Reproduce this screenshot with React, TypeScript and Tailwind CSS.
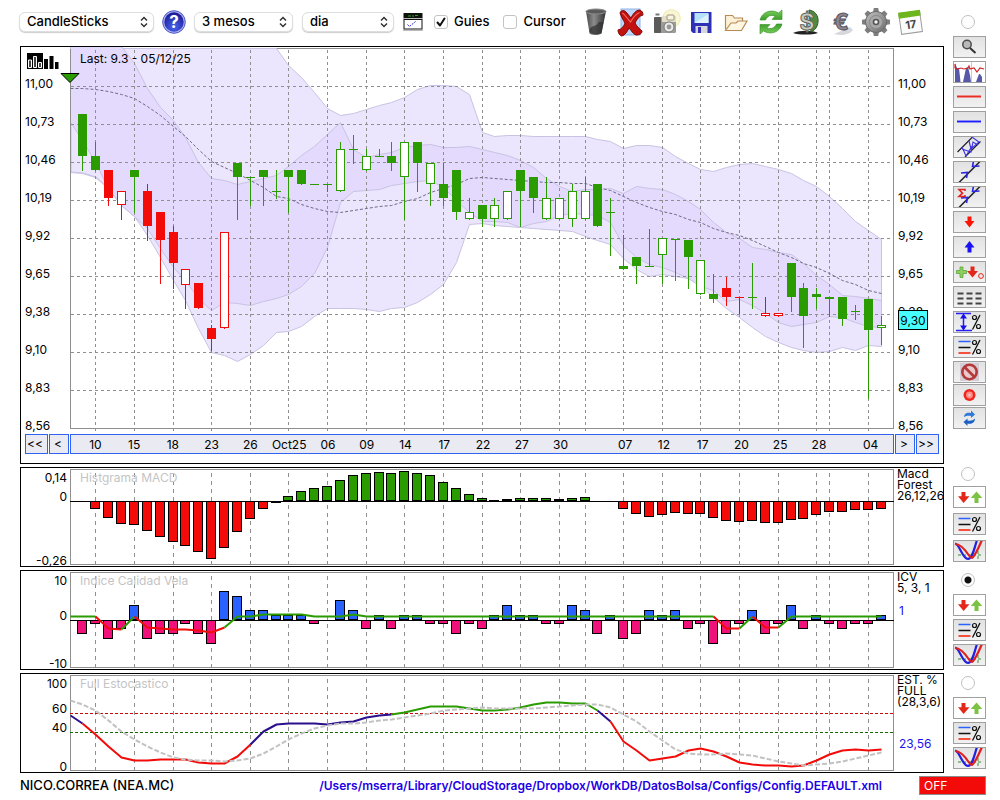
import { useState } from 'react'
import type { ReactNode } from 'react'
import clsx from 'clsx'

type Candle = {
    top: number
    bottom: number
    high?: number
    low?: number
    color?: string
    hollow?: boolean
}

const GREEN = '#2a9b00'
const RED = '#f20b08'
const NAVY = '#2b0f8c'
const GRID = '#8f8f8f'

const DATES: [number, string][] = [
    [1, '10'], [4, '15'], [7, '18'], [10, '23'], [13, '26'], [16, 'Oct25'], [19, '06'],
    [22, '09'], [25, '14'], [28, '17'], [31, '22'], [34, '27'], [37, '30'], [39, ''],
    [42, '07'], [45, '12'], [48, '17'], [51, '20'], [54, '25'], [57, '28'], [58, ''], [61, '04'],
]
const PRICES = ['11,00', '10,73', '10,46', '10,19', '9,92', '9,65', '9,38', '9,10', '8,83', '8,56']

// x of a bar, -1 is the left edge of the plot
const barX = (i: number) => (i < 0 ? 70 : 82 + 13 * i - Math.floor(i / 8))

const line = (ys: number[], from = -1) =>
    ys.map((y, i) => `${barX(from + i) + 0.5},${y + 0.5}`).join(' ')

const c = (top: number, bottom: number, high?: number, low?: number): Candle => ({ top, bottom, high, low })
const h = (top: number, bottom: number, high?: number, low?: number): Candle => ({ top, bottom, high, low, hollow: true })
const r = (top: number, bottom: number, high?: number, low?: number): Candle => ({ top, bottom, high, low, color: RED })
const rh = (top: number, bottom: number, high?: number, low?: number): Candle => ({ top, bottom, high, low, color: RED, hollow: true })

const CANDLES: Candle[] = [
    c(114, 156, 114, 171), c(156, 170, 142, 171), r(170, 198, 170, 206), rh(191, 205, 191, 220),
    c(170, 177, 170, 213), r(191, 226, 184, 241), r(212, 240, 212, 284), r(232, 263, 226, 289),
    rh(269, 285, 269, 309), r(283, 308, 283, 309), r(328, 339, 325, 351), rh(232, 328, 232, 329),
    c(163, 177, 163, 220), c(177, 178, 177, 206), c(170, 177, 170, 206), c(191, 192, 170, 199),
    c(170, 177, 170, 213), c(170, 184, 170, 185), c(184, 185), c(184, 185, 184, 192),
    h(149, 191, 142, 192), c(149, 150, 135, 164), h(156, 170, 149, 171), c(156, 157, 149, 157),
    c(156, 163, 142, 171), h(142, 177, 142, 220), c(142, 163, 142, 192), h(163, 184, 163, 206),
    c(184, 198, 163, 206), c(170, 212, 170, 220), h(212, 219, 198, 220), c(205, 219, 205, 227),
    h(205, 219, 198, 227), h(191, 219, 191, 220), c(170, 191, 170, 227), c(177, 198, 177, 213),
    h(198, 219, 177, 220), h(198, 219, 198, 220), h(191, 219, 184, 227), h(191, 219, 177, 220),
    c(184, 226, 184, 227), c(212, 213, 198, 256), c(266, 269, 235, 270), c(257, 266, 257, 284),
    c(266, 267, 229, 267), h(238, 255, 238, 284), c(239, 240, 239, 281), c(240, 257, 240, 289),
    h(260, 294, 260, 295), c(294, 299, 274, 303), r(288, 297, 277, 306), r(297, 298, 297, 314),
    c(297, 298, 263, 309), rh(313, 316, 297, 317), rh(313, 316, 313, 317), c(263, 297, 263, 312),
    c(288, 316, 283, 348), c(294, 297, 288, 309), c(297, 299, 297, 317), c(297, 319, 297, 326),
    c(311, 312, 305, 320), c(299, 330, 299, 399), h(325, 328, 316, 345),
]

const WIDE_UPPER = [
    48, 48, 48, 48, 48, 48, 48, 48, 48, 48, 48, 48, 48, 48, 48, 48, 48, 65, 77, 92, 108, 115, 113, 109, 105, 102, 97,
    89, 85, 85, 86, 94, 132, 136, 135, 135, 136, 136, 136, 136, 136, 139, 141, 148, 145, 145, 147, 156, 163, 169, 171,
    167, 164, 163, 166, 169, 173, 180, 186, 196, 208, 221, 230, 239,
]
const WIDE_LOWER = [
    172, 173, 177, 188, 205, 216, 235, 257, 280, 300, 328, 352, 355, 361, 354, 345, 332, 331, 326, 316, 308, 308, 308,
    309, 311, 308, 307, 302, 294, 284, 262, 224, 223, 225, 226, 227, 228, 229, 230, 231, 236, 240, 244, 258, 269, 276,
    274, 276, 278, 285, 297, 308, 317, 327, 336, 342, 347, 350, 352, 351, 347, 350, 345, 346,
]
const TIGHT_UPPER = [
    46, 46, 46, 46, 46, 63, 88, 107, 120, 137, 162, 178, 180, 184, 181, 178, 175, 166, 155, 146, 134, 122, 149, 157,
    154, 152, 147, 145, 144, 147, 147, 146, 149, 152, 155, 160, 167, 178, 186, 191, 189, 189, 188, 193, 186, 188, 189,
    194, 201, 209, 222, 232, 238, 247, 249, 252, 254, 263, 275, 284, 295, 296, 298, 300,
]
const TIGHT_LOWER = [
    123, 141, 163, 188, 205, 216, 228, 248, 267, 280, 298, 310, 302, 303, 305, 301, 298, 294, 286, 273, 247, 202, 191,
    190, 189, 185, 183, 181, 180, 187, 200, 212, 221, 221, 222, 227, 223, 221, 215, 213, 214, 215, 222, 245, 257, 264,
    267, 272, 278, 286, 290, 301, 299, 305, 313, 322, 326, 324, 322, 316, 317, 322, 326, 327,
]
const AVERAGE = [
    88, 88, 89, 91, 94, 98, 106, 115, 126, 136, 149, 161, 167, 173, 180, 187, 196, 198, 204, 208, 211, 212, 210, 208,
    206, 205, 201, 198, 192, 188, 184, 178, 177, 178, 179, 180, 181, 182, 182, 183, 183, 187, 190, 196, 202, 207, 211,
    214, 219, 222, 228, 232, 235, 240, 246, 252, 257, 263, 267, 273, 280, 284, 290, 293,
]

// bar heights in pixels over and under the zero line
const MACD = [
    0, -8, -17, -23, -24, -30, -36, -41, -45, -51, -58, -47, -31, -18, -8, -2, 5, 10, 13, 15, 21, 26, 28, 29, 28, 30,
    28, 26, 19, 13, 7, 3, 1, 2, 3, 3, 3, 2, 3, 4, 0, 0, -8, -13, -16, -14, -12, -13, -13, -17, -20, -21, -20, -22,
    -22, -19, -18, -14, -11, -11, -9, -9, -8,
]
const ICV = [
    -14, -4, -19, -9, 15, -19, -14, -14, -4, -14, -24, 29, 24, 10, 10, 5, 5, 5, -4, 0, 20, 10, -9, 5, -9, 5, 5, -4,
    -4, -14, -4, -9, 5, 15, 5, 5, -4, -4, 15, 10, -14, 5, -19, -14, 10, 5, 10, -9, -4, -24, -14, -4, 10, -14, -4, 15,
    -9, 5, -4, -9, -4, -4, 5,
]
const ICV_RUNS: [string, number, number[]][] = [
    [GREEN, -1, [616, 616, 616]],
    [RED, 1, [616, 628, 629]],
    [GREEN, 3, [629, 616]],
    [RED, 4, [616, 627, 628, 629, 629, 630, 632, 627]],
    [GREEN, 11, [627, 616, 616, 614, 614, 614, 614, 616, 616, 616, 614, 616]],
    [GREEN, 22, Array(28).fill(616)],
    [RED, 49, [616, 628, 628]],
    [GREEN, 51, [628, 616]],
    [RED, 52, [616, 627, 627]],
    [GREEN, 54, [627, 616, 616, 616, 616, 616, 616, 616, 616]],
]
const STOCH_RUNS: [string, number, number[]][] = [
    [NAVY, -1, [715, 723]],
    [RED, 0, [723, 734, 746, 757, 760, 760, 759, 759, 759, 762, 763, 763, 756, 744]],
    [NAVY, 13, [744, 731, 724, 723, 723, 723, 724, 722, 721, 717, 715, 714]],
    [GREEN, 24, [714, 712, 709, 706, 706, 706, 708, 710, 710, 709, 707, 704, 702, 702, 703, 703, 710]],
    [NAVY, 40, [710, 721]],
    [RED, 41, [721, 741, 750, 760, 758, 756, 750, 748, 751, 756, 762, 764, 765, 765, 766, 765, 760, 754, 750, 749, 750, 749]],
]
const STOCH_SIGNAL = [
    700, 704, 710, 720, 731, 739, 746, 752, 757, 759, 760, 760, 761, 760, 758, 753, 746, 739, 733, 728, 725, 723, 723,
    722, 720, 719, 717, 715, 713, 710, 709, 708, 707, 708, 708, 708, 708, 707, 706, 705, 704, 704, 707, 714, 721, 731,
    740, 749, 753, 754, 754, 753, 754, 755, 758, 761, 763, 765, 764, 763, 761, 758, 755, 752,
]

function GridColumns({ y1, y2, dash }: { y1: number; y2: number; dash: string }) {
    return (
        <g stroke={GRID} strokeDasharray={dash} shapeRendering="crispEdges">
            {DATES.map(([i]) => (
                <line key={i} x1={barX(i) + 0.5} x2={barX(i) + 0.5} y1={y1} y2={y2} />
            ))}
        </g>
    )
}

function PriceChart() {
    const band = (upper: number[], lower: number[]) => {
        const back = line(lower).split(' ').reverse().join(' ')
        return `${line(upper)} ${back}`
    }
    return (
        <svg viewBox="70 47 824 384" preserveAspectRatio="none" className="block w-full h-[384px]" role="img" aria-label="Candlesticks">
            <rect x="70.5" y="48.5" width="823" height="380" fill="none" stroke={GRID} shapeRendering="crispEdges" />
            <polygon points={band(WIDE_UPPER, WIDE_LOWER)} fill="#ebe5fe" stroke="#c9c3e3" />
            <polygon points={band(TIGHT_UPPER, TIGHT_LOWER)} fill="#e3dafd" stroke="#c9c3e3" />
            <polygon points="71,123 71,172 83,173 96,177 108,188 96,163 83,141" fill="#ebe5fe" stroke="#c9c3e3" />
            <GridColumns y1={50} y2={431} dash="3 3" />
            <g stroke={GRID} strokeDasharray="3 3" shapeRendering="crispEdges">
                {PRICES.slice(0, 9).map((p, i) => (
                    <line key={p} x1="71" x2="895" y1={86.5 + i * 38} y2={86.5 + i * 38} />
                ))}
            </g>
            <path d="M70.5 49v380" stroke={GRID} shapeRendering="crispEdges" />
            <polyline points={line(AVERAGE)} fill="none" stroke="#6f6a86" strokeDasharray="3 2" />
            <g shapeRendering="crispEdges">
                {CANDLES.map((k, i) => {
                    const x = barX(i)
                    const color = k.color ?? GREEN
                    return (
                        <g key={i} fill={color}>
                            <rect x={x} y={k.high ?? k.top} width="1" height={(k.low ?? k.bottom) - (k.high ?? k.top)} />
                            <rect x={x - 4} y={k.top} width="9" height={k.bottom - k.top} />
                            {k.hollow && <rect x={x - 3} y={k.top + 1} width="7" height={k.bottom - k.top - 2} fill="#fff" />}
                        </g>
                    )
                })}
            </g>
        </svg>
    )
}

function Bars({ values, zero, up, down }: { values: number[]; zero: number; up: string; down: string }) {
    return (
        <g shapeRendering="crispEdges">
            {values.map((v, i) =>
                v === 0 ? null : (
                    <g key={i}>
                        <rect x={barX(i) - 5} y={v > 0 ? zero - v : zero} width="10" height={Math.abs(v)} fill="#000" />
                        {Math.abs(v) > 2 && (
                            <rect x={barX(i) - 4} y={v > 0 ? zero - v + 1 : zero + 1} width="8" height={Math.abs(v) - 2} fill={v > 0 ? up : down} />
                        )}
                    </g>
                ),
            )}
            <rect x="70" y={zero} width="824" height="1" fill="#000" />
        </g>
    )
}

function Runs({ runs }: { runs: [string, number, number[]][] }) {
    return (
        <g fill="none" strokeWidth="2" strokeLinejoin="round">
            {runs.map(([color, from, ys]) => (
                <polyline key={from} points={line(ys, from)} stroke={color} />
            ))}
        </g>
    )
}

function StudyChart({ y, name, children }: { y: number; name: string; children: ReactNode }) {
    return (
        <svg viewBox={`70 ${y} 824 98`} preserveAspectRatio="none" className="block w-full h-[98px]" role="img" aria-label={name}>
            <rect x="70.5" y={y + 1.5} width="823" height="95" fill="none" stroke={GRID} shapeRendering="crispEdges" />
            <GridColumns y1={y + 5} y2={y + 98} dash="4 4" />
            {children}
        </svg>
    )
}

/* ---------- side buttons ---------- */

function ToolButton({ label, white, children }: { label: string; white?: boolean; children: ReactNode }) {
    return (
        <button
            type="button"
            aria-label={label}
            title={label}
            className={clsx(
                'h-[22px] w-[33px] shrink-0 border border-[#a0a0a0] overflow-hidden',
                white ? 'bg-white' : 'bg-linear-to-b from-[#e2e2e2] to-[#f1f1f1]',
            )}
        >
            <svg viewBox="0 0 31 20" className="block h-5 w-[31px]" fill="none">{children}</svg>
        </button>
    )
}

function Percent() {
    return (
        <g stroke="#111">
            <path d="M26 3L18.500 17.500" strokeWidth="1.300" />
            <circle cx="20.500" cy="5.500" r="2" strokeWidth="1.200" />
            <circle cx="24.500" cy="14.500" r="2" strokeWidth="1.200" />
        </g>
    )
}

const LevelsIcon = () => (
    <>
        <path d="M4.500 4.500h12" stroke="#2b62ff" strokeWidth="1.500" />
        <path d="M4.500 10.500h12" stroke="#111" strokeWidth="1.500" />
        <path d="M4.500 16h12" stroke="#f5503c" strokeWidth="2" />
        <Percent />
    </>
)

const UpDownIcon = () => (
    <>
        <path d="M7.500 5h4v4.200h4L9.600 16 4 9.200h3.500z" fill="#e3271b" />
        <path d="M22.500 4.500l5.800 6.500h-3.800v5h-4v-5h-3.800z" fill="#7cc243" />
    </>
)

const CurvesIcon = () => (
    <>
        <path d="M4 14h25M24 10v10" stroke="#3d8f2c" strokeDasharray="3 2" />
        <path d="M1 2.500c5 1 7 15 13 15.500C18.500 17.500 20 8 23 -1" stroke="#2420e0" strokeWidth="2.200" />
        <path d="M1 3c6 0 11 7 14 11.500s4 2 7-3S26 3 28 -1" stroke="#e02020" strokeWidth="2.200" />
    </>
)

const CrossArrows = () => (
    <>
        <path d="M4.500 21L26 -.5" stroke="#222" strokeWidth="1.500" />
        <path d="M7 11l6.500-.5-1 5.500M25.500 4l-7 .5L19.500-1" stroke="#2a25e0" strokeWidth="1.600" />
    </>
)

function DrawingTools() {
    return (
        <>
            <div className="flex flex-col gap-[3px]">
                <ToolButton label="Zoom">
                    <circle cx="13" cy="7.500" r="4.200" fill="#b9b9b9" stroke="#4c4c4c" strokeWidth="1.500" />
                    <path d="M16 11l5.500 5" stroke="#333" strokeWidth="2" />
                </ToolButton>
                <ToolButton label="Volum" white>
                    <path d="M1 20V1l2 5 2 0 1.500 14zM9 20l3-14 2-1 2 8 1 7zM22 20l3-8 1 0 2 3v5z" fill="#5758a8" />
                    <path d="M17.500 0v20" stroke="#c9c7e6" />
                    <path d="M1 2v4l2 1 4-1 3 1 4-1 1-2 1 3 4-1 3 4 3-4 4 1" stroke="#d02626" strokeWidth="1.200" />
                </ToolButton>
                <ToolButton label="Linia vermella">
                    <path d="M3 9.500h24" stroke="#f08c88" strokeWidth="3" />
                    <path d="M3 9.500h24" stroke="#e33128" />
                </ToolButton>
                <ToolButton label="Linia blava">
                    <path d="M3 9.500h24" stroke="#8f90f4" strokeWidth="3" />
                    <path d="M3 9.500h24" stroke="#1e1eff" />
                </ToolButton>
                <ToolButton label="Canal">
                    <path d="M3.500 15L18.500 0M11 20L26.500 4.500" stroke="#222" strokeWidth="1.200" />
                    <path d="M18 0l7 5-8 7-2-8M8 10l4 9 6-10M8 12l9 3 2-10 5 3" stroke="#3a33e6" strokeWidth="1.100" />
                </ToolButton>
                <ToolButton label="Creuament">
                    <CrossArrows />
                </ToolButton>
                <ToolButton label="Suma">
                    <CrossArrows />
                    <path d="M11 4V2.500H5l3.500 3.700L5 9.500h6V8" stroke="#e02420" strokeWidth="1.600" />
                </ToolButton>
                <ToolButton label="Baixista">
                    <path d="M13.500 4.500h4v4.500h3L15.500 15.500 10.500 9h3z" fill="#fb1408" />
                </ToolButton>
                <ToolButton label="Alcista">
                    <path d="M15.500 4l5 6.500h-3v5h-4v-5h-3z" fill="#1a12f5" />
                </ToolButton>
                <ToolButton label="Afegir senyal">
                    <path d="M6 5h3v3.500h3.500v3H9V15.500H6V11.500H2.500V8.500H6z" fill="#8ccf62" stroke="#5ea53b" strokeWidth="0.800" />
                    <path d="M16.500 4.500h4v4.500h3.500l-5.500 6.500L13 9h3.500z" fill="#e3271b" />
                    <circle cx="27" cy="14" r="2.400" stroke="#e3271b" />
                </ToolButton>
                <ToolButton label="Linies">
                    <path d="M3.500 6.500h24M3.500 11.500h24M3.500 16.500h24" stroke="#444" strokeWidth="2" strokeDasharray="6 3" />
                </ToolButton>
                <ToolButton label="Distancia">
                    <path d="M2 1.500h15M2 18.500h16M9.500 3v14" stroke="#2320f5" strokeWidth="1.500" />
                    <path d="M9.500 1.500L13 6.500H6zM9.500 18.500L13 13.500H6z" fill="#1410e8" />
                    <Percent />
                </ToolButton>
                <ToolButton label="Nivells">
                    <LevelsIcon />
                </ToolButton>
            </div>
            <div className="mt-[3px] flex flex-col gap-px">
                <ToolButton label="Esborrar">
                    <rect x="6" y="1" width="19" height="18" fill="#d3cdd6" />
                    <circle cx="15.500" cy="10" r="7.200" fill="#e9c9c9" stroke="#b3393b" strokeWidth="2.600" />
                    <path d="M10.500 5l10 10" stroke="#b3393b" strokeWidth="2.600" />
                </ToolButton>
                <ToolButton label="Gravar">
                    <circle cx="15.500" cy="10" r="6" fill="#f1261f" />
                    <circle cx="15.500" cy="10" r="3.400" fill="#fc8f8a" />
                    <circle cx="15.500" cy="10" r="1.200" fill="#fdc9c6" />
                </ToolButton>
                <ToolButton label="Refrescar">
                    <path d="M10 9c0-4 4-5 7-4V2.500l4 4-4 3.500V8c-3-.5-5 0-7 1z" fill="#2f7ad6" />
                    <path d="M21 10.500c0 4.500-4 6-7.500 5v2.500l-4-4 4-3.500v2c3 .5 5.500 0 7.500-2z" fill="#1b5fc4" />
                </ToolButton>
            </div>
        </>
    )
}

function PanelRadio({ label, checked, onChange }: { label: string; checked: boolean; onChange: () => void }) {
    return (
        <input
            type="radio"
            name="panel"
            aria-label={label}
            checked={checked}
            onChange={onChange}
            className="mr-[3px] block h-[14px] w-[14px] shrink-0 appearance-none rounded-full border border-[#c0c0c0] bg-white checked:bg-[radial-gradient(circle,#111_0_3px,#fff_4px)]"
        />
    )
}

/* ---------- toolbar ---------- */

function PickList({ label, value, className }: { label: string; value: string; className: string }) {
    return (
        <div className={clsx('relative', className)}>
            <select
                aria-label={label}
                defaultValue={value}
                className="block h-5 w-full appearance-none rounded-md border border-[#dedede] bg-white pl-[7px] text-[13px] leading-[17px] font-medium shadow-[0_1px_1px_rgba(0,0,0,0.2)]"
            >
                <option>{value}</option>
            </select>
            <svg viewBox="0 0 8 12" className="pointer-events-none absolute top-1 right-[6px] h-3 w-2" fill="none" stroke="#333" strokeWidth="1.500">
                <path d="M1 4.500L4 1.500l3 3M1 7.500l3 3 3-3" />
            </svg>
        </div>
    )
}

function Tick({ label, on }: { label: string; on?: boolean }) {
    const [checked, setChecked] = useState(!!on)
    return (
        <label className="flex items-center gap-[6px] text-[13px] font-medium">
            <span className="relative block h-[14px] w-[14px]">
                <input
                    type="checkbox"
                    checked={checked}
                    onChange={(e) => setChecked(e.target.checked)}
                    className="block h-[14px] w-[14px] appearance-none rounded-[3px] border border-[#c4c4c4] bg-white"
                />
                {checked && (
                    <svg viewBox="0 0 14 14" className="pointer-events-none absolute inset-0" fill="none" stroke="#111" strokeWidth="2">
                        <path d="M3.500 7.500l2.500 3 4.500-7" strokeLinecap="round" strokeLinejoin="round" />
                    </svg>
                )}
            </span>
            {label}
        </label>
    )
}

function IconButton({ label, children }: { label: string; children: ReactNode }) {
    return (
        <button type="button" aria-label={label} title={label} className="flex h-[30px] w-[35px] items-center justify-center">
            <svg viewBox="0 0 30 30" className="h-[30px] w-[30px]" fill="none">{children}</svg>
        </button>
    )
}

function GearIcon() {
    return (
        <>
            <g fill="#7e7e7e">
                {[0, 45, 90, 135, 180, 225, 270, 315].map((a) => (
                    <path key={a} d="M12 5.500l.8-4.500h4.400l.8 4.500z" transform={`rotate(${a} 15 15)`} />
                ))}
            </g>
            <circle cx="15" cy="15" r="10.500" fill="url(#steel)" stroke="#6b6b6b" />
            <circle cx="15" cy="15" r="6.500" fill="#a8a8a8" stroke="#8a8a8a" />
            <circle cx="15" cy="15" r="3.300" fill="#555" />
            <circle cx="15" cy="15" r="1.700" fill="#f4f4f4" />
        </>
    )
}

function Toolbar() {
    return (
        <header className="flex h-[46px] items-center gap-[9px] pb-[3px] pl-[19px]">
            <PickList label="Tipus de grafic" value="CandleSticks" className="w-[135px]" />
            <button type="button" aria-label="Ajuda" className="-mx-px h-6 w-6">
                <svg viewBox="0 0 24 24" className="h-6 w-6">
                    <defs>
                        <radialGradient id="help" cx="0.5" cy="0.75" r="0.7">
                            <stop offset="0" stopColor="#4a66ee" />
                            <stop offset="1" stopColor="#1b1b96" />
                        </radialGradient>
                    </defs>
                    <circle cx="12" cy="12" r="11.300" fill="#a9b0f2" stroke="#5056c8" />
                    <circle cx="12" cy="12" r="9.700" fill="url(#help)" />
                    <text x="12" y="18" textAnchor="middle" fill="#fff" fontSize="17" fontWeight="700">?</text>
                </svg>
            </button>
            <PickList label="Periode" value="3 mesos" className="w-[99px]" />
            <PickList label="Interval" value="dia" className="w-[92px]" />
            <button type="button" aria-label="Finestra" className="h-[18px] w-5">
                <svg viewBox="0 0 20 18" className="h-[18px] w-5" fill="none">
                    <rect x="0.500" y="0" width="19" height="5" fill="#111" />
                    <path d="M5 3h3M9 3h2M12 2.500h3" stroke="#2fa01e" />
                    <path d="M0 5.500h20" stroke="#bbb" />
                    <rect x="1" y="6.500" width="18" height="9.500" fill="#fff" stroke="#111" />
                    <path d="M4.500 11.500l2 2 6-5" stroke="#2f2ae0" strokeDasharray="2 1" />
                    <path d="M0 17.500h20" stroke="#bbb" />
                </svg>
            </button>
            <div className="flex gap-[14px] pl-[2px]">
                <Tick label="Guies" on />
                <Tick label="Cursor" />
            </div>
            <div className="flex pl-1">
                <IconButton label="Paperera">
                    <defs>
                        <linearGradient id="steel" x1="0" y1="0" x2="1" y2="1">
                            <stop offset="0" stopColor="#c2c2c2" />
                            <stop offset="1" stopColor="#6a6a6a" />
                        </linearGradient>
                        <linearGradient id="bin" x1="0" y1="0" x2="1" y2="0">
                            <stop offset="0" stopColor="#4b4b4b" />
                            <stop offset="0.4" stopColor="#8b8b8b" />
                            <stop offset="1" stopColor="#2f2f2f" />
                        </linearGradient>
                        <linearGradient id="leaf" x1="0" y1="0" x2="0" y2="1">
                            <stop offset="0" stopColor="#7ad05c" />
                            <stop offset="1" stopColor="#3d9c2c" />
                        </linearGradient>
                    </defs>
                    <path d="M5 4l3.500 22.500c3 2 8 2 12 0L25 4z" fill="url(#bin)" />
                    <ellipse cx="15" cy="4.500" rx="10" ry="2.500" fill="#5a5a5a" stroke="#8c8c8c" />
                    <path d="M8.500 25c0-8 7-4 9-10l5 0-2 11c-4 2-9 2-12-1z" fill="#2d2d2d" opacity="0.700" />
                </IconButton>
                <IconButton label="Eliminar">
                    <rect x="5" y="2" width="19" height="26" fill="#bcd8fa" stroke="#8fb4e8" />
                    <path d="M4 6c1-3 4-3 6-1 2 2 3 4 5 6 2-4 4-7 8-8 3 0 4 3 4 5-4 1-6 4-8 8 2 4 5 6 7 8 0 3-3 4-6 4-3-1-5-5-7-7-2 4-4 7-7 8-2 0-4-3-4-6 4-1 6-4 7-7-2-3-4-7-5-10z" fill="#c3110f" stroke="#7d0806" />
                    <path d="M6.500 6c3 2 5 6 8 9 3-5 5-8 9-9.500" stroke="#ef6a63" strokeWidth="1.200" />
                </IconButton>
                <IconButton label="Captura">
                    <circle cx="20.500" cy="11.500" r="8.800" fill="#f9f6d6" stroke="#efe9a8" />
                    <rect x="3" y="10" width="22" height="16" rx="1.500" fill="#9b9b98" />
                    <rect x="3" y="10" width="7" height="16" rx="1" fill="#5b5b5a" />
                    <rect x="11" y="9" width="14" height="6" fill="#e2deca" />
                    <rect x="16" y="8" width="7" height="5" rx="1" fill="#f7f5df" stroke="#9b977c" />
                    <circle cx="18" cy="20" r="5" fill="#ececea" stroke="#777" />
                    <circle cx="18" cy="20" r="2.400" fill="#999" />
                    <path d="M4.500 7.500h4" stroke="#777" strokeWidth="2" />
                </IconButton>
                <IconButton label="Desar">
                    <path d="M5 5h20.500v21H7l-2-2z" fill="#3030b4" />
                    <rect x="8.500" y="6" width="14" height="10" fill="#b4e2fb" />
                    <path d="M8.500 16L22.500 7v9z" fill="#dff3fe" />
                    <rect x="9.500" y="19" width="12" height="7" fill="#d6d6dc" />
                    <rect x="12" y="20" width="3" height="6" fill="#3030b4" />
                </IconButton>
                <IconButton label="Obrir">
                    <path d="M4.500 22.500V8.500h7l2 2.500h8v4" fill="#fdf0d8" stroke="#b98a52" strokeWidth="1.200" />
                    <path d="M4.500 23.500l5.500-7.500h5l2-2h9l-5.500 9.500z" fill="#fff6e4" stroke="#b98a52" strokeWidth="1.200" />
                </IconButton>
                <IconButton label="Actualitzar">
                    <g fill="url(#leaf)" stroke="#348f24" strokeWidth="0.600">
                        <path d="M4 13C6 5 15 1.500 22.500 6L26 3v9.500H16l3-3.200C15 7 11 9.500 9.500 13z" />
                        <path d="M4 13C6 5 15 1.500 22.500 6L26 3v9.500H16l3-3.200C15 7 11 9.500 9.500 13z" transform="rotate(180 15 15)" />
                    </g>
                </IconButton>
                <IconButton label="Dolar">
                    <path d="M2 26c6-3 20-3 25 0-6 2-19 2-25 0z" fill="#222" />
                    <path d="M18 3c8 1 11 9 8 16-1 3-4 5-6 6z" fill="#4f8a3f" stroke="#2f5a26" />
                    <text x="16" y="23" textAnchor="middle" fontSize="23" fontWeight="700" fill="#c9cbc0" stroke="#62665a">$</text>
                </IconButton>
                <IconButton label="Euro">
                    <path d="M8 27c8 2 15 1 19-4l-3-3z" fill="#d9d6dc" />
                    <text x="15" y="23" textAnchor="middle" fontSize="23" fontWeight="700" fill="#8b8890" stroke="#57545c">€</text>
                </IconButton>
                <IconButton label="Opcions">
                    <GearIcon />
                </IconButton>
                <IconButton label="Calendari">
                    <g transform="rotate(-8 15 15)">
                        <rect x="4" y="5" width="21" height="21" fill="#fbfbfb" stroke="#9c9c9c" />
                        <rect x="3.500" y="4" width="22" height="6" fill="#6cb51d" />
                        <text x="14.500" y="21.500" textAnchor="middle" fontSize="11" fontWeight="700" fill="#444">17</text>
                    </g>
                </IconButton>
            </div>
        </header>
    )
}

/* ---------- panels ---------- */

const navButton = 'h-5 shrink-0 border border-[#2f63f0] bg-[#e9eaf2] text-left leading-[18px]'

function PriceAxis() {
    return (
        <div className="flex flex-col gap-7 pt-8 pl-1 leading-[10px]">
            {PRICES.map((p) => (
                <span key={p}>{p}</span>
            ))}
        </div>
    )
}

function PricePanel() {
    return (
        <section className="ml-5 border border-black pb-[9px] text-xs">
            <div className="grid grid-cols-[49px_minmax(0,1fr)_49px]">
                <div className="relative">
                    <PriceAxis />
                    <svg viewBox="0 0 32 16" className="absolute top-[6px] left-[6px] h-4 w-8">
                        <path d="M0 0h16v16H0z" />
                        <path d="M1.500 7h3v7.500h-3zM6.500 3.500h3v11h-3zM11.500 9.500h3v5h-3z" fill="#444" stroke="#fff" />
                        <path d="M17 6h4v10h-4zM22.500 3h4v13h-4zM28 9h3.500v7H28z" />
                    </svg>
                </div>
                <div className="relative">
                    <PriceChart />
                    <p className="absolute top-[5px] left-[10px] leading-[14px]">Last: 9.3 - 05/12/25</p>
                    <svg viewBox="0 0 20 10" className="absolute top-[26px] left-[-10px] h-[10px] w-5">
                        <path d="M1 .5h18L10 9.500z" fill={GREEN} stroke="#000" />
                    </svg>
                </div>
                <div className="relative">
                    <PriceAxis />
                    <output className="absolute top-[263px] left-1 h-5 w-[30px] border border-black bg-[#47ffff] text-center leading-5">9,30</output>
                </div>
            </div>
            <nav className="mx-1 mt-[3px] flex gap-px">
                <button type="button" className={clsx(navButton, 'w-[23px] pl-px')}>&lt;&lt;</button>
                <button type="button" className={clsx(navButton, 'w-5 pl-1')}>&lt;</button>
                <div className="grid h-5 min-w-0 flex-1 grid-cols-[repeat(63,minmax(0,1fr))] border border-[#2f63f0] bg-[#e9eaf2] pr-[3px] pl-[5px] leading-5">
                    {DATES.filter(([, text]) => text).map(([i, text]) => (
                        <span key={i} className="flex justify-center whitespace-nowrap" style={{ gridColumnStart: i + 1 }}>
                            {text}
                        </span>
                    ))}
                </div>
                <button type="button" className={clsx(navButton, 'w-5 pl-1')}>&gt;</button>
                <button type="button" className={clsx(navButton, 'w-[23px] pl-px')}>&gt;&gt;</button>
            </nav>
        </section>
    )
}

type StudyProps = {
    title: string
    left: ReactNode
    right: ReactNode
    children: ReactNode
}

function StudyPanel({ title, left, right, children }: StudyProps) {
    return (
        <section className="ml-5 grid h-[100px] grid-cols-[49px_minmax(0,1fr)_49px] overflow-hidden border border-black text-xs">
            <div className="flex flex-col pr-[3px] text-right leading-[19px]">{left}</div>
            <div className="relative">
                {children}
                <h2 className="absolute top-0 left-[10px] leading-[19px] text-[#c4c4c4]">{title}</h2>
            </div>
            <div className="overflow-hidden pl-[3px] leading-[11px] whitespace-nowrap">{right}</div>
        </section>
    )
}

function StudyTools({ name, first, checked, onChange }: { name: string; first?: boolean; checked: boolean; onChange: () => void }) {
    return (
        <aside className={clsx('flex flex-col items-center', first ? 'gap-[5px]' : 'gap-[3px] pt-[3px]')}>
            <div className={clsx(!first && 'mb-1')}>
                <PanelRadio label={name} checked={checked} onChange={onChange} />
            </div>
            <ToolButton label={`${name} senyals`} white><UpDownIcon /></ToolButton>
            <ToolButton label={`${name} nivells`}><LevelsIcon /></ToolButton>
            <ToolButton label={`${name} corbes`}><CurvesIcon /></ToolButton>
        </aside>
    )
}

export default function App() {
    const [panel, setPanel] = useState('icv')

    return (
        <div className="bg-white pr-[14px] font-[Inter,'Liberation_Sans',sans-serif] text-black">
            <main className="grid grid-cols-[minmax(0,1fr)_33px] gap-x-[9px] gap-y-[3px]">
                <div>
                    <Toolbar />
                    <PricePanel />
                </div>
                <aside className="flex flex-col items-center pt-[15px]">
                    <div className="mb-[7px]">
                        <PanelRadio label="Preu" checked={panel === 'price'} onChange={() => setPanel('price')} />
                    </div>
                    <DrawingTools />
                </aside>

                <StudyPanel
                    title="Histgrama MACD"
                    left={<><span>0,14</span><span>0</span><span className="mt-auto leading-[11px]">-0,26</span></>}
                    right={<p>Macd<br />Forest<br />26,12,26</p>}
                >
                    <StudyChart y={468} name="Histgrama MACD">
                        <Bars values={MACD} zero={501} up={GREEN} down={RED} />
                    </StudyChart>
                </StudyPanel>
                <StudyTools name="MACD" first checked={panel === 'macd'} onChange={() => setPanel('macd')} />

                <StudyPanel
                    title="Indice Calidad Vela"
                    left={<><span>10</span><span className="mt-4">0</span><span className="mt-auto leading-[11px]">-10</span></>}
                    right={<><p>ICV<br />5, 3, 1</p><p className="mt-3 pl-0.5 text-[#1a12f5]">1</p></>}
                >
                    <StudyChart y={571} name="Indice Calidad Vela">
                        <Bars values={ICV} zero={620} up="#2962ff" down="#f0127a" />
                        <Runs runs={ICV_RUNS} />
                    </StudyChart>
                </StudyPanel>
                <StudyTools name="ICV" checked={panel === 'icv'} onChange={() => setPanel('icv')} />

                <StudyPanel
                    title="Full Estocastico"
                    left={<><span>100</span><span className="mt-[6px]">60</span><span>40</span><span className="mt-auto leading-[11px]">0</span></>}
                    right={<><p>EST. %<br />FULL<br />(28,3,6)</p><p className="mt-[31px] pl-0.5 text-[#1a12f5]">23,56</p></>}
                >
                    <StudyChart y={674} name="Full Estocastico">
                        <path d="M70 713.500h824" stroke="#c40a0a" strokeDasharray="3 2" />
                        <path d="M70 732.500h824" stroke="#156b00" strokeDasharray="3 2" />
                        <Runs runs={STOCH_RUNS} />
                        <polyline points={line(STOCH_SIGNAL)} fill="none" stroke="#c2c2c2" strokeWidth="2" strokeDasharray="5 2" />
                    </StudyChart>
                </StudyPanel>
                <StudyTools name="Estocastico" checked={panel === 'stoch'} onChange={() => setPanel('stoch')} />
            </main>

            <footer className="flex h-[25px] items-center pl-5 text-[13px]">
                <span className="font-medium">NICO.CORREA (NEA.MC)</span>
                <span className="mr-[37px] ml-auto text-xs font-semibold text-[#2200e6]">
                    /Users/mserra/Library/CloudStorage/Dropbox/WorkDB/DatosBolsa/Configs/Config.DEFAULT.xml
                </span>
                <button type="button" className="h-[19px] w-[67px] border border-[#8a8a8a] bg-[#f20b08] pl-1 text-left text-xs leading-[17px] text-white">
                    OFF
                </button>
            </footer>
        </div>
    )
}
